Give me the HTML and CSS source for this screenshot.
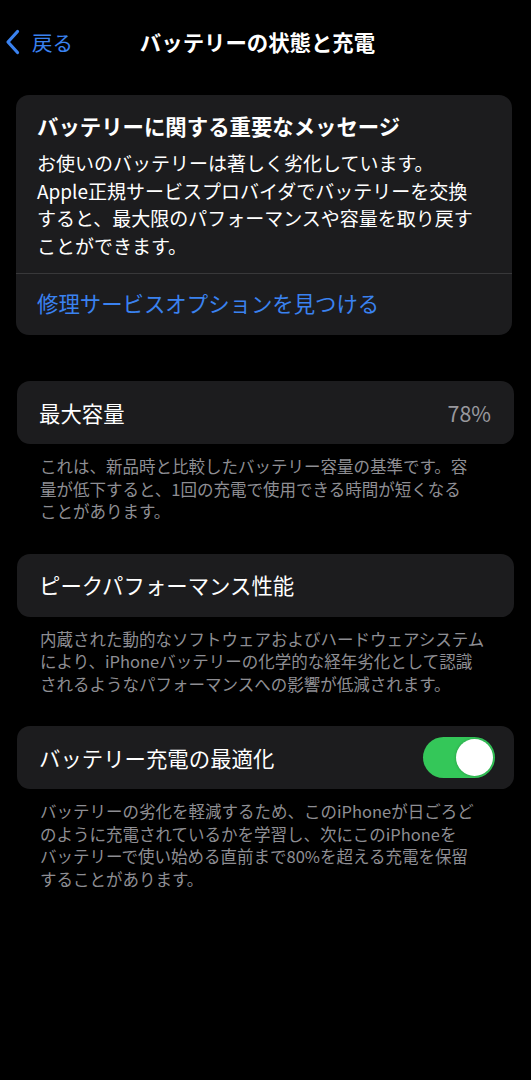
FILE: index.html
```html
<!DOCTYPE html>
<html lang="ja">
<head>
<meta charset="utf-8">
<title>バッテリーの状態と充電</title>
<link rel="stylesheet" href="styles.css">
</head>
<body>
<div class="screen">
  <header class="nav">
    <div class="back">
      <svg class="chev" width="15" height="26" viewBox="0 0 15 26"><path d="M12.5 2.5 L3 13 L12.5 23.5" fill="none" stroke="#3a82f0" stroke-width="3.2" stroke-linecap="round" stroke-linejoin="round"/></svg>
      <span class="back-label">戻る</span>
    </div>
    <h1 class="nav-title">バッテリーの状態と充電</h1>
    <div class="nav-spacer"></div>
  </header>

  <section class="card message">
    <div class="message-body">
      <h2 class="message-title">バッテリーに関する重要なメッセージ</h2>
      <p class="message-text">お使いのバッテリーは著しく劣化しています。<br>Apple正規サービスプロバイダでバッテリーを交換<br>すると、最大限のパフォーマンスや容量を取り戻す<br>ことができます。</p>
    </div>
    <div class="message-link">修理サービスオプションを見つける</div>
  </section>

  <section class="card row row-first">
    <span class="row-label">最大容量</span>
    <span class="row-value">78%</span>
  </section>
  <p class="footnote">これは、新品時と比較したバッテリー容量の基準です。容<br>量が低下すると、1回の充電で使用できる時間が短くなる<br>ことがあります。</p>

  <section class="card row">
    <span class="row-label">ピークパフォーマンス性能</span>
  </section>
  <p class="footnote">内蔵された動的なソフトウェアおよびハードウェアシステム<br>により、iPhoneバッテリーの化学的な経年劣化として認識<br>されるようなパフォーマンスへの影響が低減されます。</p>

  <section class="card row">
    <span class="row-label">バッテリー充電の最適化</span>
    <span class="toggle"><span class="knob"></span></span>
  </section>
  <p class="footnote">バッテリーの劣化を軽減するため、このiPhoneが日ごろど<br>のように充電されているかを学習し、次にこのiPhoneを<br>バッテリーで使い始める直前まで80%を超える充電を保留<br>することがあります。</p>
</div>
</body>
</html>
```

FILE: styles.css
```css
html, body {
  margin: 0;
  padding: 0;
  background: #000;
}
body {
  font-family: "Noto Sans CJK JP", "Noto Sans", "Liberation Sans", sans-serif;
  color: #fff;
}
.screen {
  width: 531px;
  min-height: 1080px;
  background: #000;
}
.nav {
  display: grid;
  grid-template-columns: 1fr auto 1fr;
  align-items: center;
  height: 30px;
  padding: 27px 0 38px 0;
}
.back {
  display: flex;
  align-items: center;
  gap: 12px;
  padding-left: 5px;
}
.chev {
  display: block;
}
.back-label {
  font-size: 20.5px;
  line-height: 30px;
  color: #3a82f0;
}
.nav-title {
  margin: 0 16px 0 0;
  font-size: 21.4px;
  line-height: 30px;
  font-weight: 700;
  color: #fff;
}
.card {
  background: #1c1c1e;
  border-radius: 13px;
  margin: 0 17px;
}
.message {
  margin-left: 16px;
  margin-right: 19px;
}
.message-body {
  padding: 16px 21px 14px 21px;
  border-bottom: 1px solid #38383a;
}
.message-title {
  margin: 0 0 8px 0;
  font-size: 21.4px;
  line-height: 30px;
  font-weight: 700;
}
.message-text {
  margin: 0;
  font-size: 19px;
  line-height: 27.5px;
  color: #fff;
  white-space: nowrap;
}
.message-link {
  padding: 14px 21px 17px 21px;
  font-size: 21.4px;
  line-height: 30px;
  color: #3a82f0;
}
.row {
  display: flex;
  align-items: center;
  justify-content: space-between;
  height: 63px;
  padding: 0 19px 0 22px;
}
.row-first {
  margin-top: 46px;
}
.row-label {
  font-size: 21.4px;
  line-height: 30px;
  color: #fff;
}
.row-value {
  font-size: 21.4px;
  line-height: 30px;
  color: #98989d;
  padding-right: 4px;
}
.footnote {
  margin: 0 17px;
  padding: 11px 23px 31px 23px;
  font-size: 16.5px;
  line-height: 22.5px;
  color: #8e8e93;
  white-space: nowrap;
}
.toggle {
  display: flex;
  align-items: center;
  justify-content: flex-end;
  width: 72px;
  height: 41px;
  border-radius: 21px;
  background: #34c759;
  padding: 0 2px;
  box-sizing: border-box;
}
.knob {
  width: 37px;
  height: 37px;
  border-radius: 50%;
  background: #fff;
  box-shadow: 0 0 3px rgba(0,0,0,0.25);
}
```
